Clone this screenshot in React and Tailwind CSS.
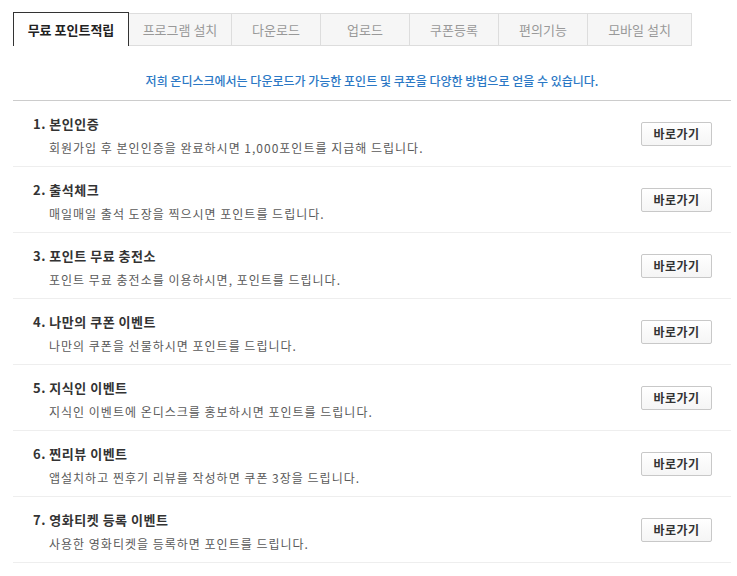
import React from "react";

const tabs = ["무료 포인트적립", "프로그램 설치", "다운로드", "업로드", "쿠폰등록", "편의기능", "모바일 설치"];
const tabW = ["w-[116px]", "w-[103px]", "w-[89px]", "w-[89px]", "w-[89px]", "w-[89px]", "w-[104px]"];

const items = [
  { title: "1. 본인인증", desc: "회원가입 후 본인인증을 완료하시면 1,000포인트를 지급해 드립니다." },
  { title: "2. 출석체크", desc: "매일매일 출석 도장을 찍으시면 포인트를 드립니다." },
  { title: "3. 포인트 무료 충전소", desc: "포인트 무료 충전소를 이용하시면, 포인트를 드립니다." },
  { title: "4. 나만의 쿠폰 이벤트", desc: "나만의 쿠폰을 선물하시면 포인트를 드립니다." },
  { title: "5. 지식인 이벤트", desc: "지식인 이벤트에 온디스크를 홍보하시면 포인트를 드립니다." },
  { title: "6. 찐리뷰 이벤트", desc: "앱설치하고 찐후기 리뷰를 작성하면 쿠폰 3장을 드립니다." },
  { title: "7. 영화티켓 등록 이벤트", desc: "사용한 영화티켓을 등록하면 포인트를 드립니다." },
];

export default function App() {
  return (
    <div className="min-h-[576px] bg-white pl-[13px] pr-[6px] pt-[12px] font-['Noto_Sans_CJK_KR',sans-serif] text-[#333]">
      <div className="flex h-[34px]">
        {tabs.map((t, i) =>
          i === 0 ? (
            <div
              key={t}
              className={`${tabW[i]} flex items-center justify-center border border-b-0 border-[#333] bg-white text-[13px] font-bold text-[#222]`}
            >
              {t}
            </div>
          ) : (
            <div
              key={t}
              className={`${tabW[i]} mt-[1px] flex h-[33px] items-center justify-center border-y border-r border-[#dddddd] bg-[#f6f6f6] text-[13px] text-[#999]`}
            >
              {t}
            </div>
          )
        )}
      </div>

      <p className="mt-[25px] text-center text-[12px] font-medium leading-[20px] text-[#2b78c5]">
        저희 온디스크에서는 다운로드가 가능한 포인트 및 쿠폰을 다양한 방법으로 얻을 수 있습니다.
      </p>

      <div className="mt-[9px] border-t border-[#cccccc]">
        {items.map((it) => (
          <div key={it.title} className="flex h-[66px] items-center justify-between border-b border-[#eeeeee] pl-[20px] pr-[19px]">
            <div className="flex flex-col items-start pt-[4px]">
              <p className="text-[13px] font-semibold leading-[18px] tracking-[0.5px] text-[#333]">{it.title}</p>
              <p className="ml-4 mt-[6px] text-[12px] leading-[18px] tracking-[1px] text-[#5a5a5a]">{it.desc}</p>
            </div>
            <button className="flex h-[24px] w-[71px] items-center justify-center rounded-[2px] border border-[#c8c8c8] bg-gradient-to-b from-white to-[#f5f5f5] text-[12px] font-bold tracking-[0.5px] text-[#333]">
              바로가기
            </button>
          </div>
        ))}
      </div>
    </div>
  );
}
